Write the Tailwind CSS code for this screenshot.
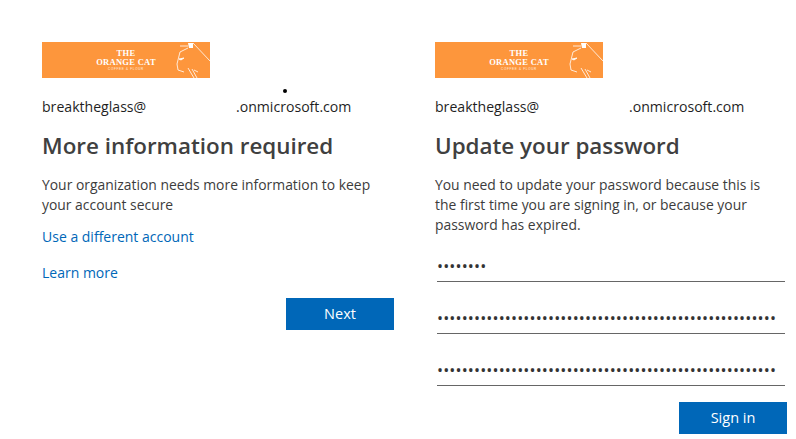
<!DOCTYPE html>
<html lang="en">
<head>
    <meta charset="UTF-8">
    <title>Sign in</title>
    <script src="https://cdn.jsdelivr.net/npm/@tailwindcss/browser@4"></script>
</head>
<body class="bg-white font-['Open_Sans',sans-serif] text-[#3c3c3c] w-[796px] h-[439px] overflow-hidden relative">

    <!-- stray dot -->
    <div class="absolute left-[283px] top-[89px] w-[4px] h-[4px] rounded-full bg-black"></div>

    <div class="flex gap-[41px] pl-[42px] pt-[42px]">

        <!-- More information required -->
        <div class="w-[352px] shrink-0">
            <div class="relative w-[168px] h-[36px] bg-[#fd963c] overflow-hidden">
                <div class="absolute left-[44px] top-[7px] w-[80px] text-center font-['Liberation_Serif',serif] font-bold text-white text-[8.5px] leading-[9px] tracking-[0.3px]">THE<br>ORANGE CAT</div>
                <div class="absolute left-[64px] top-[26px] w-[40px] text-center font-['Liberation_Sans',sans-serif] text-white/80 text-[3px] leading-[3px] tracking-[0.7px] whitespace-nowrap">COFFEE &amp; FLOUR</div>
                <svg class="absolute left-[132px] top-0" width="36" height="36" viewBox="0 0 36 36" fill="none" stroke="#ffffff" stroke-width="0.8">
                    <path d="M14 1l5 0 0 5-4 0z" fill="#ffffff" stroke="none"/>
                    <path d="M6 4l8 0M19 1l17 18"/>
                    <path d="M14 6l-8 4-3 12 1 6 6 2"/>
                    <path d="M5 17l5-1-3 2z" fill="#ffffff"/>
                    <path d="M14 26l6 10M18 27l5 9M20 28l4 2"/>
                </svg>
            </div>
            <div class="flex mt-[19px] text-[14.1px] leading-[20px] text-[#1f1f1f] whitespace-nowrap">
                <span class="w-[194px]">breaktheglass@</span><span>.onmicrosoft.com</span>
            </div>
            <h1 class="mt-[13px] text-[22.4px] leading-[32px] font-semibold text-[#404040] whitespace-nowrap">More information required</h1>
            <p class="mt-[13px] text-[13.9px] leading-[20px]">Your organization needs more information to keep<br>your account secure</p>
            <a class="block mt-[12px] text-[14px] leading-[20px] text-[#0067b8]">Use a different account</a>
            <a class="block mt-[16px] text-[14px] leading-[20px] text-[#0067b8]">Learn more</a>
            <div class="flex justify-end mt-[15px]">
                <button class="w-[108px] h-[32px] bg-[#0067b8] text-white text-[14.5px] font-medium">Next</button>
            </div>
        </div>

        <!-- Update your password -->
        <div class="w-[352px] shrink-0">
            <div class="relative w-[168px] h-[36px] bg-[#fd963c] overflow-hidden">
                <div class="absolute left-[44px] top-[7px] w-[80px] text-center font-['Liberation_Serif',serif] font-bold text-white text-[8.5px] leading-[9px] tracking-[0.3px]">THE<br>ORANGE CAT</div>
                <div class="absolute left-[64px] top-[26px] w-[40px] text-center font-['Liberation_Sans',sans-serif] text-white/80 text-[3px] leading-[3px] tracking-[0.7px] whitespace-nowrap">COFFEE &amp; FLOUR</div>
                <svg class="absolute left-[132px] top-0" width="36" height="36" viewBox="0 0 36 36" fill="none" stroke="#ffffff" stroke-width="0.8">
                    <path d="M14 1l5 0 0 5-4 0z" fill="#ffffff" stroke="none"/>
                    <path d="M6 4l8 0M19 1l17 18"/>
                    <path d="M14 6l-8 4-3 12 1 6 6 2"/>
                    <path d="M5 17l5-1-3 2z" fill="#ffffff"/>
                    <path d="M14 26l6 10M18 27l5 9M20 28l4 2"/>
                </svg>
            </div>
            <div class="flex mt-[19px] text-[14.1px] leading-[20px] text-[#1f1f1f] whitespace-nowrap">
                <span class="w-[194px]">breaktheglass@</span><span>.onmicrosoft.com</span>
            </div>
            <h1 class="mt-[13px] text-[22.4px] leading-[32px] font-semibold text-[#404040] whitespace-nowrap">Update your password</h1>
            <p class="mt-[13px] text-[13.9px] leading-[20px]">You need to update your password because this is<br>the first time you are signing in, or because your<br>password has expired.</p>

            <div class="ml-[2px] mt-[13px] w-[348px]">
                <div class="h-[34px] border-b border-[#666666] flex items-center text-[#333333] text-[16px] tracking-[0.15px] whitespace-nowrap pt-[2px]">••••••••</div>
                <div class="mt-[18px] h-[34px] border-b border-[#666666] flex items-center text-[#333333] text-[16px] tracking-[0.15px] whitespace-nowrap pt-[2px]">•••••••••••••••••••••••••••••••••••••••••••••••••••••••</div>
                <div class="mt-[18px] h-[34px] border-b border-[#666666] flex items-center text-[#333333] text-[16px] tracking-[0.15px] whitespace-nowrap pt-[2px]">•••••••••••••••••••••••••••••••••••••••••••••••••••••••</div>
            </div>
            <div class="flex justify-end mt-[16px]">
                <button class="w-[108px] h-[32px] bg-[#0067b8] text-white text-[14.5px] font-medium">Sign in</button>
            </div>
        </div>
    </div>
</body>
</html>
